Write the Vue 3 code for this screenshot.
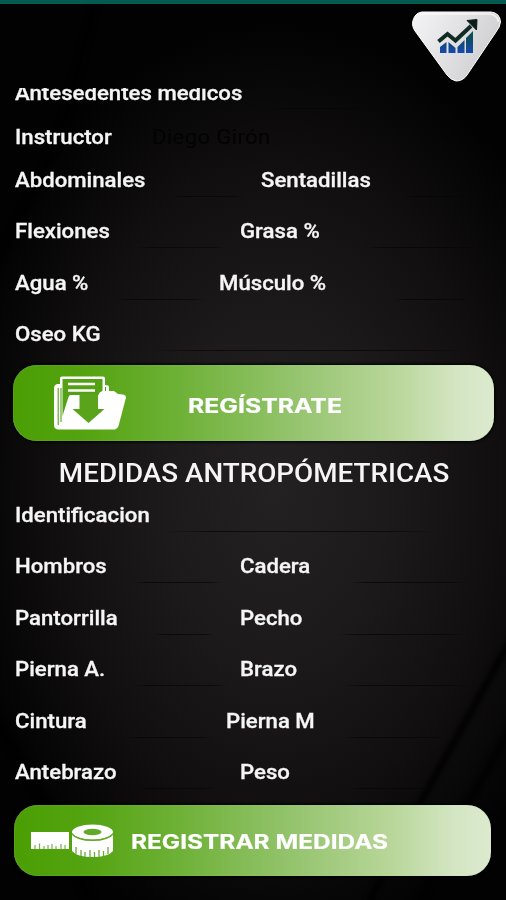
<script setup>
const body = [
  [{ label: 'Abdominales', w: 245.5, from: 172, to: 244 }, { label: 'Sentadillas', w: 230, from: 405, to: 480 }],
  [{ label: 'Flexiones', w: 225, from: 138, to: 225 }, { label: 'Grasa %', w: 250, from: 366, to: 478 }],
  [{ label: 'Agua %', w: 204, from: 118, to: 205 }, { label: 'Músculo %', w: 270, from: 395, to: 470 }],
  [{ label: 'Oseo KG', w: 475, from: 154, to: 466 }],
]
const measures = [
  [{ label: 'Identificacion', w: 475, from: 168, to: 434 }],
  [{ label: 'Hombros', w: 225, from: 133, to: 222 }, { label: 'Cadera', w: 250, from: 350, to: 466 }],
  [{ label: 'Pantorrilla', w: 225, from: 154, to: 214 }, { label: 'Pecho', w: 250, from: 339, to: 466 }],
  [{ label: 'Pierna A.', w: 225, from: 134, to: 226 }, { label: 'Brazo', w: 250, from: 343, to: 470 }],
  [{ label: 'Cintura', w: 211, from: 127, to: 213 }, { label: 'Pierna M', w: 264, from: 345, to: 445 }],
  [{ label: 'Antebrazo', w: 225, from: 140, to: 215 }, { label: 'Peso', w: 250, from: 350, to: 440 }],
]
const starts = (row, i) => 15 + row.slice(0, i).reduce((s, f) => s + f.w, 0)
const lineStyle = (row, i) => ({ marginLeft: row[i].from - starts(row, i) + 'px', width: row[i].to - row[i].from + 'px' })
</script>

<template>
  <main class="screen">
    <svg class="backdrop" viewBox="0 0 506 900" preserveAspectRatio="none">
      <defs>
        <filter id="soft"><feGaussianBlur stdDeviation="2" /></filter>
      </defs>
      <g filter="url(#soft)" fill="none" stroke="#000">
        <path d="M96 0 L62 130 L0 258" stroke-width="7" opacity=".6" />
        <path d="M514 634 L422 800 L370 900" stroke-width="7" opacity=".8" />
        <path d="M514 722 L470 800 L420 900" stroke-width="9" opacity=".6" />
        <path d="M-4 720 L44 800 L90 900" stroke-width="10" opacity=".6" />
      </g>
    </svg>
    <header class="top">
      <svg class="badge" width="92" height="76" viewBox="410 8 92 76">
        <defs>
          <linearGradient id="plate" x1="0" y1="0" x2="1" y2=".4">
            <stop offset="0" stop-color="#f4f4f6" /><stop offset=".5" stop-color="#e3e2e5" /><stop offset="1" stop-color="#cfced1" />
          </linearGradient>
          <linearGradient id="bars" x1="0" y1="31" x2="0" y2="53" gradientUnits="userSpaceOnUse">
            <stop offset="0" stop-color="#07563f" /><stop offset=".5" stop-color="#0f4a72" /><stop offset="1" stop-color="#1749b0" />
          </linearGradient>
        </defs>
        <path d="M422 12H491Q500 13 500.500 22Q500 27 496 32L467 75Q463 81 456 81Q451 80 447 75L415 31Q411 25 413.500 19Q416 12.500 422 12Z" fill="url(#plate)" stroke="#fff" stroke-width="1" />
        <path d="M419 14H490Q497.500 15 498.500 22" fill="none" stroke="#fff" stroke-width="1.600" opacity=".7" />
        <path d="M440 47L446.500 42V53H440ZM448.500 42L455.500 48V53H448.500ZM457.500 47L464.500 40V53H457.500ZM466 38L473 31V53H466Z" fill="url(#bars)" />
        <path d="M438.500 41.500L447.500 34L455.500 40.500L471 26" fill="none" stroke="#102c21" stroke-width="4" />
        <path d="M467 20.500L477 19.500L476.500 30Z" fill="#0c1c18" stroke="#0c1c18" />
      </svg>
    </header>

    <section class="scroller">
      <div class="row cut">
        <span class="label">Antesedentes medicos</span>
        <i class="rule history"></i>
      </div>
      <div class="row short">
        <div class="instructor"><span class="label">Instructor</span></div>
        <div class="choice"><span class="picked">Diego Girón</span></div>
        <i class="caret"></i>
      </div>
      <div v-for="(row, r) in body" :key="'b' + r" class="row">
        <div v-for="(f, i) in row" :key="f.label" class="field" :style="{ width: f.w + 'px' }">
          <span class="label">{{ f.label }}</span>
          <i class="rule" :style="lineStyle(row, i)"></i>
        </div>
      </div>

      <button class="cta first">
        <svg class="folder" width="74" height="56" viewBox="52 375 74 56">
          <path d="M57 384Q54 385 54 388V425Q54 429 58 429.500H115Q117.500 429 118.500 426L126 397.500Q126 395 123 394.500L118 394L114 391H109V387Q109 385 105 385V378Q105 376.500 103 376.500H62Q60 376.500 60 378V384Z" fill="#fff" />
          <path d="M62.500 379H102.500V391Q99 392 98.500 395H71Q69 395 68.500 397L62.500 416Z" fill="#55a116" />
          <path d="M58.200 388V425M61 388V422" stroke="#55a116" stroke-width="1.100" />
          <path d="M68 384H95M68 390.500H95" stroke="#fff" stroke-width="2.600" />
          <path d="M79.500 394H98V409H104.500L88.500 423L72.500 409H79.500Z" fill="#5aa41c" />
          <path d="M105.500 387V391" stroke="#55a116" stroke-width="1" />
        </svg>
        <svg class="wording one" width="156" height="28" viewBox="0 0 156 28">
          <text x="0" y="21" textLength="154" lengthAdjust="spacingAndGlyphs">REGÍSTRATE</text>
        </svg>
      </button>

      <h2 class="title">MEDIDAS ANTROPÓMETRICAS</h2>

      <div v-for="(row, r) in measures" :key="'m' + r" class="row">
        <div v-for="(f, i) in row" :key="f.label" class="field" :style="{ width: f.w + 'px' }">
          <span class="label">{{ f.label }}</span>
          <i class="rule" :style="lineStyle(row, i)"></i>
        </div>
      </div>

      <button class="cta second">
        <svg class="tape" width="84" height="34" viewBox="30 824 84 34">
          <path d="M31 832H69V849H31Z" fill="#fff" />
          <path d="M35 849V845M39.500 849V843.500M44 849V846M48 849V845M52 849V844M56 849V846M61 849V844M65 849V845" stroke="#7cae55" stroke-width="1.200" />
          <path d="M72 834V851Q77 857 92.500 857T113 851V834Q107 840 92.500 840T72 834Z" fill="#fff" />
          <path d="M76 854V847M81 856V850M85 857V852M90 857V850M94.500 857V852M99 857V850M103.500 856V851M108 854V847" stroke="#6cab3a" stroke-width="1.300" />
          <ellipse cx="92.500" cy="832" rx="20.500" ry="7.400" fill="#fff" />
          <path d="M72 834Q77 840.300 92.500 840.300T113 834" fill="none" stroke="#5fa724" stroke-width="1.300" />
          <ellipse cx="92.500" cy="832" rx="9" ry="3.300" fill="#63a92a" />
        </svg>
        <svg class="wording two" width="260" height="28" viewBox="0 0 260 28">
          <text x="0" y="21" textLength="257" lengthAdjust="spacingAndGlyphs">REGISTRAR MEDIDAS</text>
        </svg>
      </button>
    </section>
  </main>
</template>

<style>
body { margin: 0; background: #000; }
</style>

<style scoped>
.screen {
  position: relative;
  box-sizing: border-box;
  width: 506px;
  height: 900px;
  overflow: hidden;
  display: flex;
  flex-direction: column;
  border-top: 4px solid #045c50;
  background: radial-gradient(ellipse 320px 470px at 275px 485px, #242122 0%, #1c1a1b 35%, #110f10 68%, #070606 90%, #020202 100%);
  font-family: Roboto, sans-serif;
  color: #f5f5f5;
}
.backdrop { position: absolute; left: 0; top: -4px; width: 506px; height: 900px; }
.top { position: relative; flex: 0 0 84px; display: flex; justify-content: flex-end; padding: 4px 4px 0 0; box-sizing: border-box; }
.scroller { position: relative; flex: 1; overflow: hidden; display: flex; flex-direction: column; }
.row { flex: 0 0 51.450px; height: 51.450px; padding-left: 15px; display: flex; align-items: stretch; }
.row.cut { flex-basis: 50px; height: 50px; margin-top: -18px; align-items: center; }
.cut .label { margin-top: -5px; width: 253px; }
.history { width: 174px; margin-top: 27px; }
.row.short { flex-basis: 35px; height: 35px; align-items: center; }
.field { display: flex; flex-direction: column; }
.label, .picked {
  display: block;
  font-size: 20.300px;
  white-space: nowrap;
  transform: scaleX(1.094);
  transform-origin: 0 50%;
}
.label {
  line-height: 51.450px;
  height: 41px;
  font-weight: 500;
  -webkit-text-stroke: .3px #f5f5f5;
}
.cut .label, .short .label { height: auto; line-height: 34px; }
.short .label { margin-top: -1px; }
.rule { display: block; height: 1px; opacity: .7; background: linear-gradient(90deg, transparent, #050505 15%, #070707 85%, transparent); }
.instructor { width: 137px; }
.choice { width: 289px; }
.picked { color: #030303; margin-top: -1px; letter-spacing: .3px; }
.caret { border: 4px solid transparent; border-top-color: #050505; border-bottom: 0; }
.cta {
  flex: none;
  display: flex;
  align-items: center;
  border: 0;
  padding: 0;
  color: #fff;
  background: linear-gradient(90deg, #4a9e03 0%, #55a412 16%, #70b23a 36%, #97c571 60%, #b8d699 79%, #d3e5c2 92%, #dceacf 100%);
  box-shadow: 0 0 3px 1px #000, inset 0 0 1px #b9d79d;
}
.first { width: 481px; height: 76px; margin: 4.200px 0 0 13px; border-radius: 24px; }
.second { width: 477px; height: 71px; margin: 6.500px 0 0 14px; border-radius: 24px; }
.folder { margin-left: 39px; }
.tape { margin-left: 16px; }
.wording text { font-family: Inter, sans-serif; font-size: 19.500px; font-weight: 700; fill: #fff; stroke: #fff; stroke-width: .2px; }
.one { margin: 6px 0 0 62px; }
.two { margin-left: 17px; margin-top: 2px; }
.title {
  flex: none;
  margin: 0;
  height: 49px;
  line-height: 65px;
  text-align: center;
  font-size: 25.200px;
  font-weight: 500;
  padding-left: 2px;
  transform: scaleX(1.104);
}
</style>
